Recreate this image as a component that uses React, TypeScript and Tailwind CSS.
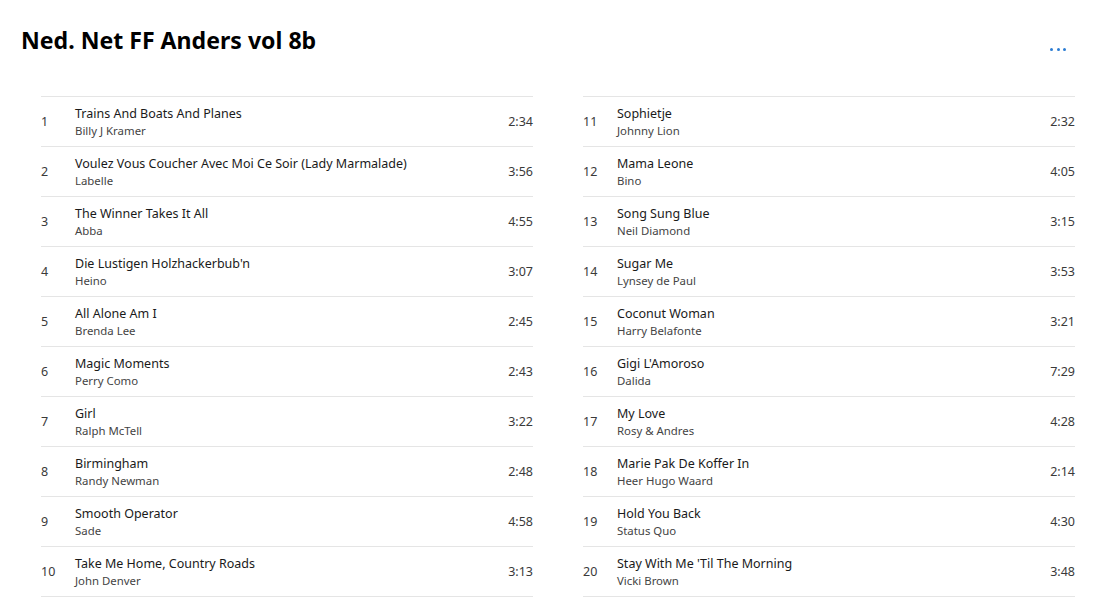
const tracks = [
  { n: 1, title: "Trains And Boats And Planes", artist: "Billy J Kramer", time: "2:34" },
  { n: 2, title: "Voulez Vous Coucher Avec Moi Ce Soir (Lady Marmalade)", artist: "Labelle", time: "3:56" },
  { n: 3, title: "The Winner Takes It All", artist: "Abba", time: "4:55" },
  { n: 4, title: "Die Lustigen Holzhackerbub'n", artist: "Heino", time: "3:07" },
  { n: 5, title: "All Alone Am I", artist: "Brenda Lee", time: "2:45" },
  { n: 6, title: "Magic Moments", artist: "Perry Como", time: "2:43" },
  { n: 7, title: "Girl", artist: "Ralph McTell", time: "3:22" },
  { n: 8, title: "Birmingham", artist: "Randy Newman", time: "2:48" },
  { n: 9, title: "Smooth Operator", artist: "Sade", time: "4:58" },
  { n: 10, title: "Take Me Home, Country Roads", artist: "John Denver", time: "3:13" },
  { n: 11, title: "Sophietje", artist: "Johnny Lion", time: "2:32" },
  { n: 12, title: "Mama Leone", artist: "Bino", time: "4:05" },
  { n: 13, title: "Song Sung Blue", artist: "Neil Diamond", time: "3:15" },
  { n: 14, title: "Sugar Me", artist: "Lynsey de Paul", time: "3:53" },
  { n: 15, title: "Coconut Woman", artist: "Harry Belafonte", time: "3:21" },
  { n: 16, title: "Gigi L'Amoroso", artist: "Dalida", time: "7:29" },
  { n: 17, title: "My Love", artist: "Rosy & Andres", time: "4:28" },
  { n: 18, title: "Marie Pak De Koffer In", artist: "Heer Hugo Waard", time: "2:14" },
  { n: 19, title: "Hold You Back", artist: "Status Quo", time: "4:30" },
  { n: 20, title: "Stay With Me 'Til The Morning", artist: "Vicki Brown", time: "3:48" },
];

type Track = (typeof tracks)[number];

function TrackRow({ track }: { track: Track }) {
  return (
    <div className="flex h-[50px] items-center border-t border-[#e5e5e5]">
      <span className="w-[34px] shrink-0 pt-[1px] text-[12.5px] text-[#3a3a3a]">{track.n}</span>
      <div className="flex min-w-0 flex-1 flex-col">
        <span className="pt-[1px] text-[12.5px] leading-[18px] text-[#1a1a1a]">{track.title}</span>
        <span className="text-[11.4px] leading-[16px] text-[#444]">{track.artist}</span>
      </div>
      <span className="pt-[1px] text-[12.5px] text-[#3a3a3a]">{track.time}</span>
    </div>
  );
}

export default function App() {
  const left = tracks.slice(0, 10);
  const right = tracks.slice(10);

  return (
    <div className="h-[600px] w-[1109px] overflow-hidden bg-white font-['Noto_Sans',sans-serif]">
      <div className="flex items-start justify-between pl-[21px] pr-[43px] pt-[24px]">
        <h1 className="text-[23.1px] font-bold leading-[32px] text-black">Ned. Net FF Anders vol 8b</h1>
        <button className="mt-[24px] flex gap-[3.5px]" aria-label="More">
          <span className="h-[3px] w-[3px] rounded-full bg-[#2b7cd3]" />
          <span className="h-[3px] w-[3px] rounded-full bg-[#2b7cd3]" />
          <span className="h-[3px] w-[3px] rounded-full bg-[#2b7cd3]" />
        </button>
      </div>

      <div className="mt-[40px] grid grid-cols-2 gap-x-[50px] pl-[41px] pr-[34px]">
        <div className="border-b border-[#e5e5e5]">
          {left.map((t) => (
            <TrackRow key={t.n} track={t} />
          ))}
        </div>
        <div className="border-b border-[#e5e5e5]">
          {right.map((t) => (
            <TrackRow key={t.n} track={t} />
          ))}
        </div>
      </div>
    </div>
  );
}
